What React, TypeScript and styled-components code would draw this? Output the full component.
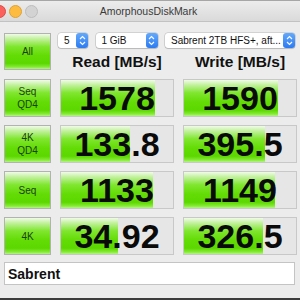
import { Fragment } from 'react';
import styled, { createGlobalStyle } from 'styled-components';

const GlobalStyle = createGlobalStyle`
  html, body {
    margin: 0;
    padding: 0;
    background: #ececec;
  }
  body {
    font-family: 'Liberation Sans', Arial, sans-serif;
  }
`;

interface Result {
  label: string[];
  read: string;
  readFill: number;
  write: string;
  writeFill: number;
}

const results: Result[] = [
  { label: ['Seq', 'QD4'], read: '1578', readFill: 94, write: '1590', writeFill: 94 },
  { label: ['4K', 'QD4'], read: '133.8', readFill: 69, write: '395.5', writeFill: 81 },
  { label: ['Seq'], read: '1133', readFill: 92, write: '1149', writeFill: 91 },
  { label: ['4K'], read: '34.92', readFill: 57, write: '326.5', writeFill: 79 },
];

const GREEN = `linear-gradient(to bottom,
  #f0fbe8 0%, #c2f19c 14%, #7fe62e 36%, #62dc04 62%, #5cd800 84%, #84ea34 94%, #b4f384 100%)`;

const Window = styled.div`
  width: 300px;
  height: 300px;
  display: flex;
  flex-direction: column;
  background: #ececec;
  border-bottom: 2px solid #3c3c3c;
  box-sizing: border-box;
  overflow: hidden;
`;

const TitleBar = styled.div`
  position: relative;
  height: 22px;
  flex: none;
  box-sizing: border-box;
  background: linear-gradient(to bottom, #ececec, #dadada);
  border-top: 1px solid #a6a6a6;
  border-bottom: 1px solid #c2c2c2;
  display: flex;
  align-items: center;
  justify-content: center;
`;

const Title = styled.div`
  font-size: 10.5px;
  color: #3a3a3a;
  margin-left: -3px;
`;

const Lights = styled.div`
  position: absolute;
  left: -7px;
  top: 4px;
  display: flex;
  gap: 3px;
`;

const Light = styled.span<{ $color: string; $edge: string }>`
  width: 11px;
  height: 11px;
  border-radius: 50%;
  background: ${({ $color }) => $color};
  border: 0.5px solid ${({ $edge }) => $edge};
`;

const Content = styled.div`
  flex: 1;
  padding: 11px 0 0 4px;
  display: grid;
  grid-template-columns: 47px 114px 114px;
  grid-template-rows: 38px repeat(4, 38px) 22px;
  column-gap: 9px;
  row-gap: 8px;
`;

const TestButton = styled.div<{ $tall?: boolean }>`
  height: ${({ $tall }) => ($tall ? '37px' : '38px')};
  box-sizing: border-box;
  border: 1px solid #b2b2b2;
  background: ${GREEN};
  display: flex;
  flex-direction: column;
  align-items: center;
  justify-content: center;
  font-size: 10px;
  line-height: 13px;
  color: #1c3f0c;
`;

const HeaderCell = styled.div`
  grid-column: 2 / 4;
  display: flex;
  flex-direction: column;
  justify-content: space-between;
`;

const Selects = styled.div`
  display: flex;
  gap: 7.5px;
  margin-left: -2px;
`;

const Select = styled.div<{ $width: number }>`
  width: ${({ $width }) => $width}px;
  height: 15px;
  box-sizing: border-box;
  background: #fff;
  border-radius: 3px;
  box-shadow: 0 0 0 0.5px rgba(0, 0, 0, 0.22), 0 1px 1px rgba(0, 0, 0, 0.12);
  display: flex;
  align-items: center;
  font-size: 10px;
  color: #111;
  padding-left: 6px;
`;

const SelectText = styled.span`
  flex: 1;
  white-space: nowrap;
  overflow: hidden;
`;

const Stepper = styled.span`
  width: 12px;
  height: 15px;
  border-radius: 3px;
  background: linear-gradient(to bottom, #63a9fb, #2b7bf2);
  display: flex;
  align-items: center;
  justify-content: center;
`;

const Headings = styled.div`
  display: grid;
  grid-template-columns: 114px 114px;
  column-gap: 9px;
`;

const Heading = styled.div`
  text-align: center;
  font-size: 15.5px;
  font-weight: bold;
  color: #111;
  line-height: 18px;
`;

const ResultBox = styled.div<{ $fill: number }>`
  box-sizing: border-box;
  border: 1px solid #c8c8c8;
  background: ${GREEN} no-repeat, #e6e6e6;
  background-size: ${({ $fill }) => $fill}px 100%, auto;
  display: flex;
  align-items: center;
  justify-content: center;
  font-size: 34px;
  font-weight: bold;
  color: #0a0a0a;
`;

const Comment = styled.div`
  grid-column: 1 / 4;
  width: 291px;
  margin-top: -1px;
  box-sizing: border-box;
  background: #fff;
  border: 1px solid #c4c4c4;
  display: flex;
  align-items: center;
  padding-left: 3px;
  font-size: 14px;
  font-weight: bold;
  color: #111;
`;

function Arrows() {
  return (
    <svg width="7" height="11" viewBox="0 0 7 11">
      <path d="M1 4 L3.5 1.5 L6 4" fill="none" stroke="#fff" strokeWidth="1.1" />
      <path d="M1 7 L3.5 9.5 L6 7" fill="none" stroke="#fff" strokeWidth="1.1" />
    </svg>
  );
}

function Dropdown({ width, text }: { width: number; text: string }) {
  return (
    <Select $width={width}>
      <SelectText>{text}</SelectText>
      <Stepper>
        <Arrows />
      </Stepper>
    </Select>
  );
}

export default function App() {
  return (
    <>
      <GlobalStyle />
      <Window>
        <TitleBar>
          <Lights>
            <Light $color="#fc605c" $edge="#de4a45" />
            <Light $color="#fdbc40" $edge="#dea236" />
            <Light $color="#d3d3d3" $edge="#bdbdbd" />
          </Lights>
          <Title>AmorphousDiskMark</Title>
        </TitleBar>
        <Content>
          <TestButton $tall>All</TestButton>
          <HeaderCell>
            <Selects>
              <Dropdown width={30} text="5" />
              <Dropdown width={62} text="1 GiB" />
              <Dropdown width={130} text="Sabrent 2TB HFS+, aft..." />
            </Selects>
            <Headings>
              <Heading>Read [MB/s]</Heading>
              <Heading>Write [MB/s]</Heading>
            </Headings>
          </HeaderCell>
          {results.map((r) => (
            <Fragment key={r.label.join(' ') + r.read}>
              <TestButton>
                {r.label.map((l) => (
                  <span key={l}>{l}</span>
                ))}
              </TestButton>
              <ResultBox $fill={r.readFill}>{r.read}</ResultBox>
              <ResultBox $fill={r.writeFill}>{r.write}</ResultBox>
            </Fragment>
          ))}
          <Comment>Sabrent</Comment>
        </Content>
      </Window>
    </>
  );
}
